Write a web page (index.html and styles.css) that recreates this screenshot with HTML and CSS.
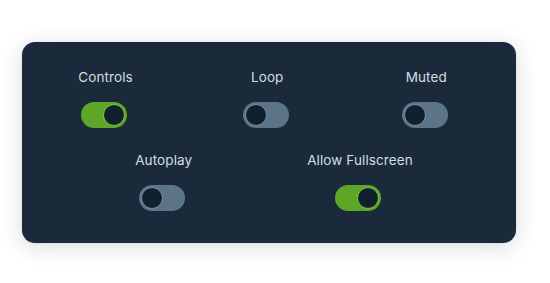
FILE: index.html
```html
<!DOCTYPE html>
<html>
<head>
<meta charset="utf-8">
<link rel="stylesheet" href="styles.css">
</head>
<body>
<div class="card">
  <div class="row row-top">
    <div class="item">
      <span class="label">Controls</span>
      <span class="toggle on"><span class="knob"></span></span>
    </div>
    <div class="item">
      <span class="label">Loop</span>
      <span class="toggle"><span class="knob"></span></span>
    </div>
    <div class="item">
      <span class="label">Muted</span>
      <span class="toggle"><span class="knob"></span></span>
    </div>
  </div>
  <div class="row row-bottom">
    <div class="item">
      <span class="label">Autoplay</span>
      <span class="toggle"><span class="knob"></span></span>
    </div>
    <div class="item">
      <span class="label">Allow Fullscreen</span>
      <span class="toggle on"><span class="knob"></span></span>
    </div>
  </div>
</div>
</body>
</html>
```

FILE: styles.css
```css
* { box-sizing: border-box; }
html, body { margin: 0; padding: 0; background: #ffffff; }
body {
  width: 550px;
  height: 283px;
  padding: 42px 34px 40px 22px;
  font-family: Inter, "Noto Sans", sans-serif;
}
.card {
  width: 494px;
  height: 201px;
  background: #1a2a3a;
  border-radius: 13px;
  box-shadow: 0 4px 22px rgba(20, 30, 50, 0.16), 0 0 3px rgba(20, 30, 50, 0.08);
  padding: 27px 0 0 0;
  display: flex;
  flex-direction: column;
  gap: 24px;
}
.row {
  display: flex;
  justify-content: center;
  align-items: flex-start;
}
.row-top { gap: 110px; padding-right: 9px; }
.row-bottom { gap: 115px; padding-left: 10px; }
.item {
  display: flex;
  flex-direction: column;
  align-items: center;
  gap: 16px;
}
.label {
  color: #d4dce4;
  font-size: 13.5px;
  line-height: 17px;
  letter-spacing: 0.1px;
  white-space: nowrap;
}
.toggle {
  display: flex;
  align-items: center;
  justify-content: flex-start;
  width: 46px;
  height: 26px;
  border-radius: 13px;
  background: #5c7487;
  padding: 2px;
  margin-right: 3px;
}
.toggle.on {
  background: #5da628;
  justify-content: flex-end;
}
.knob {
  width: 22px;
  height: 22px;
  border-radius: 50%;
  background: #10202e;
  border: 1.5px solid #7a90a1;
}
.toggle.on .knob { border-color: #80c83d; }
```
